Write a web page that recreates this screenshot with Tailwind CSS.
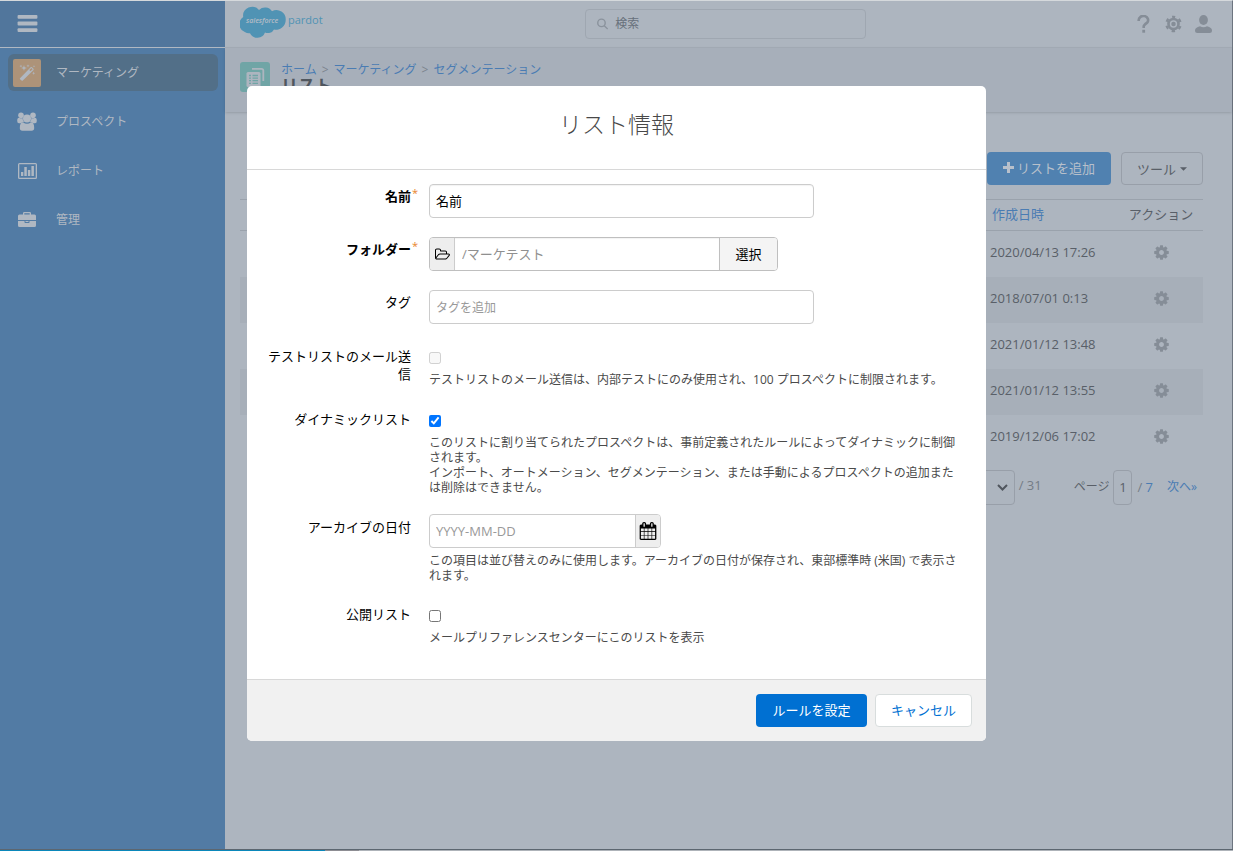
<!DOCTYPE html>
<html lang="ja">
<head>
<meta charset="utf-8">
<title>リスト情報</title>
<meta name="viewport" content="width=device-width, initial-scale=1">
<script src="https://cdn.jsdelivr.net/npm/@tailwindcss/browser@4"></script>
</head>
<body class="relative flex min-h-screen flex-col bg-[#adb5bf] font-['Open_Sans','Noto_Sans_CJK_JP',sans-serif] text-[13px] leading-[18px] text-[#595f68]">
<svg class="hidden" aria-hidden="true">
  <symbol id="cog" viewBox="0 0 1792 1792"><path d="M1152 896q0-106-75-181t-181-75-181 75-75 181 75 181 181 75 181-75 75-181zm512-109v222q0 12-8 23t-20 13l-185 28q-19 54-39 91 35 50 107 138 10 12 10 25t-9 23q-27 37-99 108t-94 71q-12 0-26-9l-138-108q-44 23-91 38-16 136-29 186-7 28-36 28h-222q-14 0-24.500-8.500t-11.500-21.500l-28-184q-49-16-90-37l-141 107q-10 9-25 9-14 0-25-11-126-114-165-168-7-10-7-23 0-12 8-23 15-21 51-66.500t54-70.500q-27-50-41-99l-183-27q-13-2-21-12.500t-8-23.500v-222q0-12 8-23t19-13l186-28q14-46 39-92-40-57-107-138-10-12-10-24 0-10 9-23 26-36 98.500-107.500t94.500-71.500q13 0 26 10l138 107q44-23 91-38 16-136 29-186 7-28 36-28h222q14 0 24.500 8.500t11.500 21.500l28 184q49 16 90 37l142-107q9-9 24-9 13 0 25 10 129 119 165 170 7 8 7 22 0 12-8 23-15 21-51 66.500t-54 70.500q26 50 41 98l183 28q13 2 21 12.500t8 23.500z"/></symbol>
</svg>

<div class="flex flex-1 border-t border-r border-t-[#d5d9dc] border-r-[#6d7580]">
  <aside class="w-[225px] shrink-0 bg-[#527ba4] text-[#b0b8c2]">
    <div class="flex h-[47px] items-center border-b border-[#b0b8c2] bg-[#51769c] px-[17px] pb-[2px]">
      <button type="button" aria-label="メニュー">
        <svg class="h-[17px] w-[21px] fill-current" viewBox="0 0 21 18"><rect y="0" width="21" height="4" rx="1"/><rect y="7" width="21" height="4" rx="1"/><rect y="14" width="21" height="4" rx="1"/></svg>
      </button>
    </div>
    <nav class="flex flex-col gap-3 py-[6px] pr-[7px] pl-2 text-xs">
      <a href="#" class="flex h-[37px] items-center gap-[15px] rounded-md bg-[#526f88] pl-[5px]">
        <span class="flex h-7 w-7 items-center justify-center rounded-xs bg-[#ad9379]">
          <svg class="h-[18px] w-[18px] fill-current" viewBox="0 0 18 18"><path d="M2 14.300 L12.700 3.300 Q13.300 2.700 14 3.300 L15.500 4.800 Q16 5.400 15.500 6 L4.800 16.600 Q4.200 17.100 3.600 16.600 L2 15.300 Q1.600 14.800 2 14.300Z"/><path d="M11.300 6.100 L13.400 4 L14.600 5.200 L12.500 7.300Z" fill="#ad9379"/><path d="M6 1l.6 2.200L9 4l-2.400.7L6 7l-.7-2.300L3 4l2.300-.8zM10 .2l.4 1.300 1.300.4-1.300.4L10 3.600l-.4-1.300-1.300-.4 1.300-.4zM3 .5l.3 1.200 1.200.3-1.200.4L3 3.600l-.4-1.200L1.400 2l1.200-.3zM15.700 7.500l.4 1.300 1.300.4-1.300.4-.4 1.300-.4-1.300-1.300-.4 1.300-.4zM16 1l.3 1 .9.300-.9.300-.3 1-.3-1-.9-.3.900-.3z"/></svg>
        </span>マーケティング</a>
      <a href="#" class="flex h-[37px] items-center gap-[15px] pl-[5px]">
        <span class="flex w-7 justify-center"><svg class="h-[19px] w-5 fill-current" viewBox="0 0 20 19"><circle cx="4" cy="3.200" r="2.800"/><circle cx="16" cy="3.200" r="2.800"/><path d="M.2 9 Q.2 5.700 2 5.700 Q4 6.800 5.600 6.100 Q5.500 8.500 7 10 Q5 10 4 11.200 H2 Q.2 11.200 .2 9Z M19.800 9 Q19.800 5.700 18 5.700 Q16 6.800 14.400 6.100 Q14.500 8.500 13 10 Q15 10 16 11.200 H18 Q19.800 11.200 19.800 9Z"/><circle cx="10" cy="6.600" r="4"/><path d="M6 10.300 Q10 13.300 14 10.300 Q17.200 10.300 17.200 16 Q17.200 18.700 14.600 18.700 H5.400 Q2.800 18.700 2.800 16 Q2.800 10.300 6 10.300Z"/></svg></span>プロスペクト</a>
      <a href="#" class="flex h-[37px] items-center gap-[15px] pl-[5px]">
        <span class="flex w-7 justify-center"><svg class="h-4 w-[19px] fill-current" viewBox="0 0 19 16"><path fill-rule="evenodd" d="M1.500 0h16Q19 0 19 1.500v13q0 1.500-1.500 1.500h-16Q0 16 0 14.500v-13Q0 0 1.500 0zM1.300 1.300v13.400h16.400V1.300z"/><path d="M3 9h2.300v4H3zM6.300 4h2.500v9H6.300zM9.900 7h2.400v6H9.900zM13.400 3h2.500v10h-2.500z"/></svg></span>レポート</a>
      <a href="#" class="flex h-[37px] items-center gap-[15px] pl-[5px]">
        <span class="flex w-7 justify-center"><svg class="h-[15px] w-[18px] fill-current" viewBox="0 0 18 15"><path fill-rule="evenodd" d="M5 2.500V1.200Q5 0 6.200 0h5.600Q13 0 13 1.200v1.300h3.500Q18 2.500 18 4v4H0V4q0-1.500 1.500-1.500zM6.300 1.300v1.200h5.400V1.300z"/><path d="M0 9h6.500v1.300q0 .7.700.7h3.600q.7 0 .7-.7V9H18v4.500q0 1.500-1.500 1.500h-15Q0 15 0 13.500z"/><rect x="7.500" y="9" width="3" height="1"/></svg></span>管理</a>
    </nav>
  </aside>

  <div class="min-w-0 flex-1">
    <header class="flex h-[47px] items-center justify-between border-b border-[#a4acb6] pr-5 pl-[15px]">
      <a href="#" aria-label="salesforce pardot" class="-mt-1">
        <svg class="h-8 w-[86px]" viewBox="0 0 86 32"><path fill="#5093b4" d="M19 4 A8.500 8.500 0 0 1 32 5.200 A9.300 9.300 0 0 1 45.700 14 A9.600 9.600 0 0 1 34 23.400 A7 7 0 0 1 25 26.500 A8.200 8.200 0 0 1 10 27.300 A7.500 7.500 0 0 1 4.800 26 A8.500 8.500 0 0 1 3.200 11 A9 9 0 0 1 19 4Z"/><text x="6" y="17" fill="#b4bcc6" font-family="Open Sans" font-size="7" font-weight="600" font-style="italic">salesforce</text><text x="48" y="18" fill="#5093b4" font-family="Open Sans" font-size="11">pardot</text></svg>
      </a>
      <label class="mr-[10px] flex h-[30px] w-[281px] items-center gap-[7px] rounded border border-[#9fa7b1] pl-[11px] text-xs">
        <svg class="h-3 w-3 fill-none stroke-[#8a929c] stroke-[1.500]" viewBox="0 0 12 12"><circle cx="4.800" cy="4.800" r="4"/><path d="M7.800 7.800 11.500 11.500"/></svg>
        <input type="search" aria-label="検索" placeholder="検索" class="w-full bg-transparent outline-none placeholder:text-[#67707b]">
      </label>
      <div class="flex items-center gap-[13px] text-[#858d97]">
        <button type="button" aria-label="ヘルプ"><svg class="h-[18px] w-[17px] fill-none stroke-current stroke-[2.600]" viewBox="-2 0 17 18"><path d="M1.700 6 V5.300 A4.700 4.200 0 1 1 10.200 7.600 Q6.700 10 6.700 11.500 V13"/><path d="M6.700 14.800V17.700" stroke-width="2.800"/></svg></button>
        <button type="button" aria-label="設定"><svg class="h-[18px] w-[17px] fill-none stroke-current" viewBox="0 0 18 18"><circle cx="9" cy="9" r="5.300" stroke-width="2.800"/><circle cx="9" cy="9" r="7.600" stroke-width="2.400" stroke-dasharray="3.600 4.359" stroke-dashoffset="1.800" transform="rotate(-90 9 9)"/><circle cx="9" cy="9" r="2.400" class="fill-current" stroke="none"/></svg></button>
        <button type="button" aria-label="ユーザー"><svg class="h-[18px] w-[17px] fill-current" viewBox="0 0 17 18"><ellipse cx="8.500" cy="5" rx="4.400" ry="5"/><path d="M0 15.500Q0 12.500 5 11.300Q8.500 13 12 11.300Q17 12.500 17 15.500Q17 18 14.500 18H2.500Q0 18 0 15.500Z"/></svg></button>
      </div>
    </header>
    <div class="flex h-16 gap-[11px] bg-[#a7afba] px-[15px] pt-[14px] shadow-sm">
      <svg class="h-[30px] w-[30px] shrink-0" viewBox="0 0 30 30"><rect width="30" height="30" rx="3" fill="#70a5a6"/><path d="M12 6.800H21.500Q23.300 6.800 23.300 8.600V19" fill="none" stroke="#adb5bf" stroke-width="1.800"/><rect x="6.500" y="10" width="14" height="15" rx="1.500" fill="#adb5bf"/><path d="M9 13.500h2m1.500 0h5.500M9 16.100h2m1.500 0h5.500M9 18.700h2m1.500 0h5.500M9 21.300h2m1.500 0h5.500" stroke="#70a5a6" stroke-width="1.300"/></svg>
      <div>
        <nav aria-label="パンくず" class="flex gap-[5px] text-xs leading-[15px] text-[#4a7cb3]"><a href="#">ホーム</a><span class="text-[#7b838d]">&gt;</span><a href="#">マーケティング</a><span class="text-[#7b838d]">&gt;</span><a href="#">セグメンテーション</a></nav>
        <h1 class="text-[17px] leading-[18px] font-bold text-[#50565e]">リスト</h1>
      </div>
    </div>

    <main class="pt-10 pr-[29px] pl-[15px]">
      <div class="flex justify-end gap-[10px]">
        <button type="button" class="flex h-[33px] w-[124px] items-center justify-center gap-[3px] rounded bg-[#5081b0] pb-[2px] text-[#b8c0cb]"><svg class="h-[11px] w-[11px] fill-current" viewBox="0 0 11 11"><path d="M4 0h3v4h4v3H7v4H4V7H0V4h4z"/></svg>リストを追加</button>
        <button type="button" class="flex h-[33px] w-[82px] items-center justify-center gap-1 rounded border border-[#989fa9]">ツール<svg class="h-1 w-[7px] fill-current" viewBox="0 0 8 4"><path d="M0 0h8L4 4z"/></svg></button>
      </div>
      <table class="mt-[14px] w-full table-fixed border-collapse">
        <colgroup><col><col class="w-[135px]"><col class="w-[84px]"></colgroup>
        <thead><tr class="h-[31px] border-y border-[#9aa2ac]"><td></td><th class="pb-[3px] pl-2 text-left font-normal"><a href="#" class="text-[#4a7cb3]">作成日時</a></th><th class="pb-[3px] font-normal">アクション</th></tr></thead>
        <tbody>
          <tr class="h-[46px]"><td></td><td class="pb-1 pl-[6px]">2020/04/13 17:26</td><td class="pb-1 text-center"><button type="button" aria-label="アクション" class="align-middle"><svg class="h-[17px] w-[17px] fill-[#858d97]"><use href="#cog"/></svg></button></td></tr>
          <tr class="h-[46px] bg-[#a7afb9]"><td></td><td class="pb-1 pl-[6px]">2018/07/01 0:13</td><td class="pb-1 text-center"><button type="button" aria-label="アクション" class="align-middle"><svg class="h-[17px] w-[17px] fill-[#858d97]"><use href="#cog"/></svg></button></td></tr>
          <tr class="h-[46px]"><td></td><td class="pb-1 pl-[6px]">2021/01/12 13:48</td><td class="pb-1 text-center"><button type="button" aria-label="アクション" class="align-middle"><svg class="h-[17px] w-[17px] fill-[#858d97]"><use href="#cog"/></svg></button></td></tr>
          <tr class="h-[46px] bg-[#a7afb9]"><td></td><td class="pb-1 pl-[6px]">2021/01/12 13:55</td><td class="pb-1 text-center"><button type="button" aria-label="アクション" class="align-middle"><svg class="h-[17px] w-[17px] fill-[#858d97]"><use href="#cog"/></svg></button></td></tr>
          <tr class="h-[46px]"><td></td><td class="pb-1 pl-[6px]">2019/12/06 17:02</td><td class="pb-1 text-center"><button type="button" aria-label="アクション" class="align-middle"><svg class="h-[17px] w-[17px] fill-[#858d97]"><use href="#cog"/></svg></button></td></tr>
        </tbody>
      </table>
      <div class="mt-[9px] flex items-center justify-end pr-[6px]">
        <div class="grid items-center">
          <select aria-label="表示件数" class="col-start-1 row-start-1 h-[35px] w-[70px] appearance-none rounded border border-[#989fa9]"></select>
          <svg class="col-start-1 row-start-1 mr-[7px] h-[7px] w-[11px] justify-self-end fill-none stroke-[#50565e] stroke-2" viewBox="0 0 11 7"><path d="M1 1l4.500 4.500L10 1"/></svg>
        </div>
        <span class="ml-1 pb-1 text-[#747c86]">/ 31</span>
        <label for="page" class="ml-8 text-xs">ページ</label>
        <input id="page" type="text" value="1" class="ml-1 h-[35px] w-[19px] rounded border border-[#989fa9] text-center">
        <span class="ml-[5px] text-[#747c86]">/ <a href="#" class="text-[#4a7cb3]">7</a></span>
        <a href="#" class="ml-[14px] text-xs text-[#4a7cb3]">次へ»</a>
      </div>
    </main>
  </div>
</div>
<div class="flex h-[2px] border-t border-[#5c6670]"><div class="w-[325px] bg-[#0a87ba]"></div><div class="w-[34px] bg-[#8d8d93]"></div><div class="flex-1 bg-[#aeb3b9]"></div></div>

<div class="absolute inset-x-0 top-[86px] flex justify-center">
  <section role="dialog" aria-modal="true" aria-labelledby="dialog-title" class="w-full max-w-[739px] overflow-hidden rounded-[5px] bg-white text-black">
    <h2 id="dialog-title" class="border-b border-[#d8d8d8] pt-[23px] pb-[30px] text-center text-[23px] leading-[30px] font-light text-[#484848]">リスト情報</h2>
    <form class="flex flex-col gap-[19px] px-[15px] pt-[14px] pb-[34px]">
      <div class="flex gap-[18px]">
        <label for="name" class="relative w-[149px] shrink-0 pt-[3px] text-right font-bold">名前<span class="absolute top-0 -right-[7px] text-[11px] font-normal text-[#e8842c]">*</span></label>
        <input id="name" type="text" value="名前" class="h-[34px] w-[385px] rounded border border-[#ccc] px-[6px] pb-[2px] shadow-[inset_0_1px_1px_#0000000d]">
      </div>
      <div class="flex gap-[18px]">
        <label for="folder" class="relative w-[149px] shrink-0 pt-[3px] text-right font-bold">フォルダー<span class="absolute top-0 -right-[7px] text-[11px] font-normal text-[#e8842c]">*</span></label>
        <div class="flex h-[34px] w-[349px] overflow-hidden rounded border border-[#bfbfbf]">
          <span class="flex w-[25px] items-center justify-center border-r border-[#ccc] bg-[#eee]"><svg class="h-[14px] w-[15px]" viewBox="0 0 1920 1792"><path d="M1781 1000q0-35-53-35h-1088q-40 0-85.500 21.500t-71.500 52.500l-294 363q-18 24-18 40 0 35 53 35h1088q40 0 86-22t71-53l294-363q18-22 18-39zm-1141-163h768v-160q0-40-28-68t-68-28h-576q-40 0-68-28t-28-68v-64q0-40-28-68t-68-28h-320q-40 0-68 28t-28 68v853l256-315q44-53 116-87.500t140-34.500zm1269 163q0 62-46 120l-295 363q-43 53-116 87.500t-140 34.500h-1088q-92 0-158-66t-66-158v-960q0-92 66-158t158-66h320q92 0 158 66t66 158v32h544q92 0 158 66t66 158v160h192q54 0 99 24.500t67 70.500q15 32 15 68z"/></svg></span>
          <input id="folder" type="text" value="/マーケテスト" readonly class="min-w-0 flex-1 px-[7px] text-[#8f8f8f] shadow-[inset_0_1px_1px_#0000000d]">
          <button type="button" class="w-[58px] border-l border-[#bfbfbf] bg-[#f4f4f4]">選択</button>
        </div>
      </div>
      <div class="flex gap-[18px]">
        <label for="tags" class="w-[149px] shrink-0 pt-[3px] text-right">タグ</label>
        <input id="tags" type="text" placeholder="タグを追加" class="h-[34px] w-[385px] rounded border border-[#ccc] px-[6px] text-xs placeholder:text-[#999]">
      </div>
      <div class="flex gap-[18px]">
        <label for="test" class="w-[149px] shrink-0 pt-1 pl-1 text-right">テストリストのメール送信</label>
        <div class="min-w-0 flex-1 pt-[9px] pr-2">
          <input id="test" type="checkbox" disabled class="mb-2 block h-3 w-3">
          <p class="text-xs leading-[15px] text-[#4a4a4a]">テストリストのメール送信は、内部テストにのみ使用され、100 プロスペクトに制限されます。</p>
        </div>
      </div>
      <div class="flex gap-[18px]">
        <label for="dynamic" class="w-[149px] shrink-0 pt-1 text-right">ダイナミックリスト</label>
        <div class="min-w-0 flex-1 pt-[9px]">
          <input id="dynamic" type="checkbox" checked class="mb-2 block h-3 w-3">
          <p class="pr-[10px] text-xs leading-[15px] text-[#4a4a4a]">このリストに割り当てられたプロスペクトは、事前定義されたルールによってダイナミックに制御されます。<br>インポート、オートメーション、セグメンテーション、または手動によるプロスペクトの追加または削除はできません。</p>
        </div>
      </div>
      <div class="flex gap-[18px]">
        <label for="archive" class="w-[149px] shrink-0 pt-1 text-right">アーカイブの日付</label>
        <div class="min-w-0 flex-1">
          <div class="flex h-[34px] w-[232px] overflow-hidden rounded border border-[#ccc]">
            <input id="archive" type="text" placeholder="YYYY-MM-DD" class="min-w-0 flex-1 px-[6px] placeholder:text-[#999]">
            <button type="button" aria-label="カレンダー" class="flex w-[25px] items-center justify-center border-l border-[#ccc] bg-[#eee]"><svg class="h-[18px] w-[18px]" viewBox="0 0 1792 1792"><path d="M192 1664h288v-288h-288v288zm352 0h320v-288h-320v288zm-352-352h288v-320h-288v320zm352 0h320v-320h-320v320zm-352-384h288v-288h-288v288zm736 736h320v-288h-320v288zm-384-736h320v-288h-320v288zm768 736h288v-288h-288v288zm-384-352h320v-320h-320v320zm-352-864v-288q0-13-9.500-22.500t-22.500-9.500h-64q-13 0-22.500 9.500t-9.500 22.500v288q0 13 9.500 22.500t22.500 9.500h64q13 0 22.500-9.500t9.500-22.500zm736 864h288v-320h-288v320zm-384-384h320v-288h-320v288zm384 0h288v-288h-288v288zm32-480v-288q0-13-9.500-22.500t-22.500-9.500h-64q-13 0-22.500 9.500t-9.500 22.500v288q0 13 9.500 22.500t22.500 9.500h64q13 0 22.500-9.500t9.500-22.500zm384-64v1280q0 52-38 90t-90 38h-1408q-52 0-90-38t-38-90v-1280q0-52 38-90t90-38h128v-96q0-66 47-113t113-47h64q66 0 113 47t47 113v96h384v-96q0-66 47-113t113-47h64q66 0 113 47t47 113v96h128q52 0 90 38t38 90z"/></svg></button>
          </div>
          <p class="mt-[5px] -mb-px pr-2 text-xs leading-[15px] text-[#4a4a4a]">この項目は並び替えのみに使用します。アーカイブの日付が保存され、東部標準時 (米国) で表示されます。</p>
        </div>
      </div>
      <div class="flex gap-[18px]">
        <label for="public" class="w-[149px] shrink-0 pt-1 text-right">公開リスト</label>
        <div class="min-w-0 flex-1 pt-[9px]">
          <input id="public" type="checkbox" class="mb-2 block h-3 w-3">
          <p class="text-xs leading-[15px] text-[#4a4a4a]">メールプリファレンスセンターにこのリストを表示</p>
        </div>
      </div>
    </form>
    <footer class="flex justify-end gap-2 border-t border-[#d8d8d8] bg-[#f1f1f1] p-[14px]">
      <button type="button" class="h-[33px] w-[111px] rounded bg-[#0070d2] pb-[2px] text-white">ルールを設定</button>
      <button type="button" class="h-[33px] w-[97px] rounded border border-[#d8dddd] bg-white pb-[2px] text-[#0070d2]">キャンセル</button>
    </footer>
  </section>
</div>
</body>
</html>
